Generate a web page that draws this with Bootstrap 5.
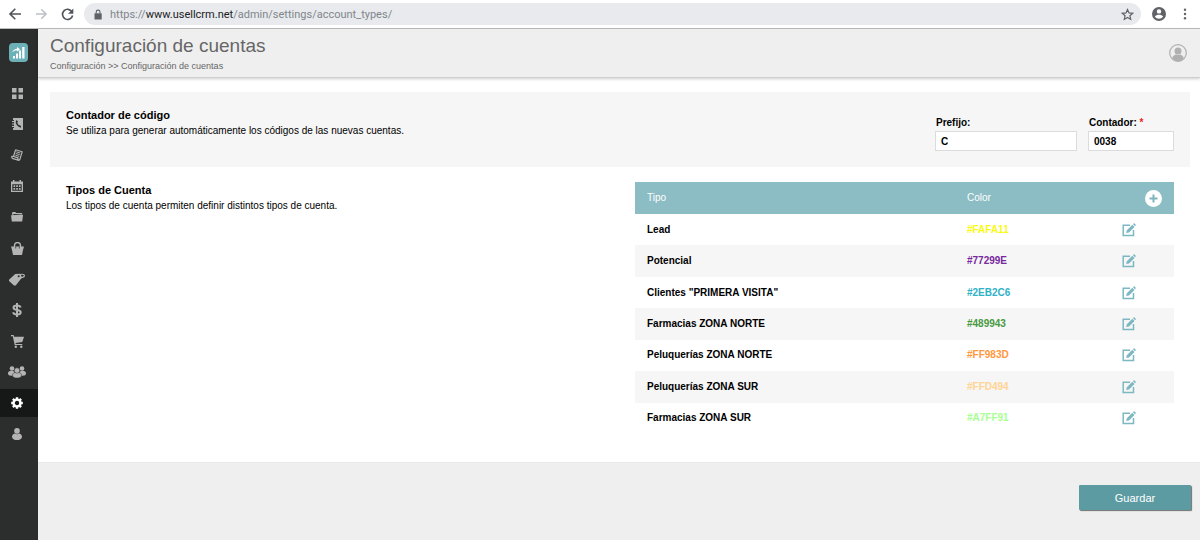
<!DOCTYPE html>
<html lang="es">
<head>
<meta charset="utf-8">
<meta name="viewport" content="width=device-width, initial-scale=1">
<title>Configuración de cuentas</title>
<link href="https://cdn.jsdelivr.net/npm/bootstrap@5.3.0/dist/css/bootstrap.min.css" rel="stylesheet">
<style>
  body { font-family: "Liberation Sans", Arial, sans-serif; font-size: 10px; line-height: 16px; color: #000; background: #fff; }
  svg { display: block; fill: currentColor; flex: none; }
  .chrome-bar { height: 29px; padding: 0 12px 0 8px; border-bottom: 1px solid #bdbdbd; color: #5f6368; }
  .chrome-bar button, .rail-link, .icon-btn { border: 0; padding: 0; background: none; color: inherit; }
  .history { gap: 14px; }
  .omnibox { height: 22px; border-radius: 11px; background: #e8eaed; padding: 0 7px 0 8px; margin: 0 11px 0 10px; gap: 6px; }
  .address { font-family: Roboto, sans-serif; font-size: 11px; line-height: 16px; padding-top: 1px; color: #80868b; text-decoration: none; white-space: nowrap; }
  .address span { color: #202124; }
  .rail { width: 38px; background: #2c2e2d; color: #b4b4b4; }
  .rail-logo { margin: 14px 0 17px 9px; align-self: flex-start; }
  .rail-nav { gap: 3px; }
  .rail-link { height: 28px; padding-right: 4px; }
  .rail-link.active { background: #161817; color: #fff; }
  .page-head { background: #efefef; border-bottom: 1px solid #cfcfcf; box-shadow: 0 1px 3px #0003; height: 49px; padding: 0 13px 0 12px; color: #666; }
  .page-head h1 { font-size: 19px; line-height: 24px; margin: 5px 0 0; font-weight: 400; }
  .crumbs { font-size: 9px; line-height: 16px; }
  .crumbs a { color: inherit; text-decoration: none; }
  .block { display: grid; grid-template-columns: 19fr 18fr; padding: 0 16px; margin: 0 10px 0 12px; }
  .block h2 { font-size: 11px; line-height: 16px; font-weight: 700; margin: 0; }
  .counter { background: #f6f6f6; margin-top: 14px; padding-top: 15px; padding-bottom: 15px; min-height: 75px; }
  .fields { gap: 11px; padding-top: 8px; }
  .fields label { font-weight: 700; margin-left: 1px; }
  .fields input { display: block; width: 100%; height: 20px; border: 1px solid #dcdcdc; background: #fff; padding: 0 5px; font-weight: 700; color: #000; border-radius: 0; }
  .f-prefix { width: 142px; } .f-count { width: 86px; }
  .req { color: #e22; }
  .types { padding-top: 15px; padding-bottom: 28px; }
  .types-table { table-layout: fixed; width: 100%; height: 252px; font-weight: 700; }
  .types-table th, .types-table td { padding: 0 12px; vertical-align: middle; }
  .types-table thead { background: #8cbdc4; color: #fff; }
  .types-table th { font-weight: 400; height: 32px; }
  .types-table tbody tr:nth-child(even) { background: #f6f6f6; }
  .types-table .icon-btn { display: block; color: #7db8c2; }
  .types-table thead .icon-btn { color: #fff; margin-left: auto; }
  .c-color { width: 155px; } .c-act { width: 64px; }
  .page-foot { background: #efefef; border-top: 1px solid #e9e9e9; padding: 22px 9px; }
  .btn-save { width: 112px; height: 25px; padding: 0; border: 0; border-radius: 1px; background: #5d9ba3; color: #fff; font-size: 11px; line-height: 16px; box-shadow: 1px 1px 1px #0008; }
</style>
</head>
<body class="d-flex flex-column min-vh-100">
<svg class="d-none" aria-hidden="true">
  <symbol id="edit" viewBox="0 0 14 14"><path fill="none" stroke="currentColor" stroke-width="1.500" d="M8 2.200H1.200v10.300h10.300V7"/><path d="M4.200 10l.6-2.800 5.500-5.500 2.200 2.200-5.500 5.500zM11 1.200l1-1.100 2 2-1 1.100z"/></symbol>
</svg>

<div class="chrome-bar d-flex align-items-center">
  <div class="history d-flex align-items-center">
    <button type="button" aria-label="Atrás"><svg width="14" height="14" viewBox="0 0 14 14"><path fill="none" stroke="#50545a" stroke-width="1.600" d="M13 7H2.500M7.300 1.800L2 7l5.300 5.200"/></svg></button>
    <button type="button" aria-label="Adelante"><svg width="11" height="14" viewBox="1 0 12 14"><path fill="none" stroke="#bdc0c4" stroke-width="1.600" d="M1 7h10.500M6.700 1.800L12 7l-5.300 5.200"/></svg></button>
    <button type="button" aria-label="Recargar"><svg width="13" height="13" viewBox="0 0 13 13"><path fill="none" stroke="#50545a" stroke-width="1.600" d="M11 3.800A5.100 5.100 0 1 0 11.600 7.500"/><path fill="#50545a" d="M12.300.600v5.200H7.100z"/></svg></button>
  </div>
  <div class="omnibox d-flex align-items-center flex-grow-1">
    <svg width="12" height="11" viewBox="0 0 12 11"><path d="M2.500 4.300h7.200v6.200H2.500z"/><path fill="none" stroke="currentColor" stroke-width="1.100" d="M4.200 4.500V3a1.900 1.900 0 0 1 3.800 0v1.500"/></svg>
    <a class="address" href="#">https://<span>www.usellcrm.net</span>/admin/settings/account_types/</a>
    <button type="button" class="ms-auto" aria-label="Marcador"><svg width="13" height="13" viewBox="0 0 13 13"><path fill="none" stroke="currentColor" stroke-width="1.200" d="M6.500 1.500l1.500 3.400 3.700.4-2.800 2.400.8 3.700-3.200-1.900-3.200 1.900.8-3.700L1.300 5.300l3.700-.4z"/></svg></button>
  </div>
  <button type="button" aria-label="Perfil"><svg width="14" height="14" viewBox="0 0 14 14"><path fill-rule="evenodd" d="M7 0a7 7 0 1 1 0 14A7 7 0 0 1 7 0zm0 2.200a2.200 2.200 0 1 0 0 4.400 2.200 2.200 0 0 0 0-4.400zM2.900 9.600c1 1.500 2.400 2.200 4.100 2.200s3.100-.7 4.100-2.200C10.500 8.400 8.400 7.800 7 7.800s-3.500.6-4.100 1.800z"/></svg></button>
  <button type="button" class="ms-3" aria-label="Menú"><svg width="6" height="12" viewBox="0 0 6 12"><circle cx="3" cy="1.700" r="1.200"/><circle cx="3" cy="6" r="1.200"/><circle cx="3" cy="10.300" r="1.200"/></svg></button>
</div>

<div class="d-flex flex-grow-1">
  <aside class="rail d-flex flex-column flex-shrink-0">
    <a class="rail-logo" href="#" aria-label="Inicio"><svg width="19" height="19" viewBox="0 0 19 19"><rect width="19" height="19" rx="4" fill="#6cb0b8"/><g fill="#fff"><path d="M4 13h2v2.500H4zM7 10.500h2v5H7zM10 7.500h2v8h-2zM13.200 4h2.300v11.500h-2.300z"/><path d="M3 9.600c1-2.600 3-3.700 5-3.800V4l3 2.300-2.700 2.500V7.500C6 7.400 4.500 8 3 9.600z"/></g></svg></a>
    <nav class="rail-nav d-flex flex-column">
      <a class="rail-link d-flex align-items-center justify-content-center" href="#" aria-label="Panel"><svg width="11" height="11" viewBox="0 0 11 11"><path d="M0 0h4.500v4.500H0zM6.500 0H11v4.500H6.500zM0 6.500h4.500V11H0zM6.500 6.500H11V11H6.500z"/></svg></a>
      <a class="rail-link d-flex align-items-center justify-content-center" href="#" aria-label="Agenda"><svg width="11" height="12" viewBox="0 0 11 12"><path d="M1 0h10v12H1v-2h1V9H0V8h2V6.500H0v-1h2V4H0V3h2V2H1z"/><path fill="none" stroke="#2c2e2d" stroke-width="1.500" d="M4.700 2.500c-1 2.800 1.400 6 4.300 6.400M4.300 3l1.400 1M7.500 8.900l.4-1.500"/></svg></a>
      <a class="rail-link d-flex align-items-center justify-content-center" href="#" aria-label="Notas"><svg width="12" height="12" viewBox="0 0 12 12"><path fill="none" stroke="currentColor" stroke-width="1.200" d="M4.600.800l6.500 2-2.200 7.500c-.3.900-1 1.100-1.800.9L2 9.700M4.600.800L2.500 7.500M2.500 7.500L.8 7.300c-.3 1.500 0 2.100 1.200 2.400M2.500 7.500l4.400 1.300.2 2.300"/><path fill="none" stroke="currentColor" d="M5.300 2.800l4 1.200M4.800 4.500l4 1.200M4.300 6.200l4 1.200"/></svg></a>
      <a class="rail-link d-flex align-items-center justify-content-center" href="#" aria-label="Calendario"><svg width="12" height="12" viewBox="0 0 12 12"><path fill-rule="evenodd" d="M0 1.500h2V0h1.500v1.500h5V0H10v1.500h2V12H0zM1.300 4.300v6.400h9.400V4.300z"/><path d="M2.500 5.200h1.700v1.700H2.500zM5.200 5.200h1.700v1.700H5.200zM7.900 5.200h1.700v1.700H7.900zM2.500 8h1.700v1.700H2.500zM5.200 8h1.700v1.700H5.200zM7.900 8h1.700v1.700H7.900z"/></svg></a>
      <a class="rail-link d-flex align-items-center justify-content-center" href="#" aria-label="Archivos"><svg width="12" height="10" viewBox="0 0 12 10"><path d="M1 2.500V1l.7-1h2.600l.8 1h6v1H3L1.500 3zM0 3.300L10.800 2.500l1.200.5-.8 6.400H.8z"/></svg></a>
      <a class="rail-link d-flex align-items-center justify-content-center" href="#" aria-label="Productos"><svg width="13" height="13" viewBox="0 0 13 13"><path d="M0 4.500h13L12 8l-1 5H2L1 8z"/><path fill="none" stroke="currentColor" stroke-width="1.400" d="M3.500 6V3.500a3 3 0 0 1 6 0V6"/><path fill="none" stroke="#2c2e2d" stroke-width=".7" d="M4.700 4.500v2M8.300 4.500v2"/></svg></a>
      <a class="rail-link d-flex align-items-center justify-content-center" href="#" aria-label="Tarifas"><svg width="16" height="13" viewBox="0 0 16 13"><path d="M6.200 1l5.200-.3 1.600 3.800-6.300 8L5 12.500 0 8V6.800z"/><path fill="none" stroke="currentColor" stroke-width="1.200" d="M9.500 2.600c2-2 6-1.600 5.900.2 0 1.600-3.200 2.200-5.600 1.300"/><circle cx="9.700" cy="3.300" r="1" fill="#2c2e2d"/></svg></a>
      <a class="rail-link d-flex align-items-center justify-content-center" href="#" aria-label="Ventas"><svg width="10" height="14" viewBox="0 0 10 14"><path fill="none" stroke="currentColor" stroke-width="2" d="M8.600 4.400C8.200 3 6.800 2.500 5 2.500c-2 0-3.500.8-3.500 2.200C1.500 8 8.700 6 8.700 9.200c0 1.500-1.600 2.300-3.700 2.300S1.500 10.800 1.100 9.200M5 0v14"/></svg></a>
      <a class="rail-link d-flex align-items-center justify-content-center" href="#" aria-label="Pedidos"><svg width="13" height="13" viewBox="0 0 13 13"><path d="M0 0h2.600l.5 1.700H13L11.300 7 4.500 8l.3.900h6.500V10H3.700L1.800 1.200H0z"/><circle cx="4.800" cy="11.800" r="1.200"/><circle cx="10.300" cy="11.800" r="1.200"/></svg></a>
      <a class="rail-link d-flex align-items-center justify-content-center" href="#" aria-label="Clientes"><svg width="18" height="12" viewBox="0 0 18 12"><circle cx="4" cy="2.500" r="2.300"/><circle cx="14" cy="2.500" r="2.300"/><ellipse cx="3.400" cy="7.300" rx="3.400" ry="2.500"/><ellipse cx="14.600" cy="7.300" rx="3.400" ry="2.500"/><g stroke="#2c2e2d" stroke-width=".5"><ellipse cx="9" cy="9.200" rx="4.500" ry="2.800"/><circle cx="9" cy="4.500" r="2.700"/></g></svg></a>
      <a class="rail-link active d-flex align-items-center justify-content-center" href="#" aria-label="Configuración"><svg width="12" height="12" viewBox="0 0 12 12"><circle cx="6" cy="6" r="3.400" fill="none" stroke="currentColor" stroke-width="2.400"/><path fill="none" stroke="currentColor" stroke-width="2.400" d="M6 .2v2M6 9.800v2M.2 6h2M9.800 6h2M1.900 1.900l1.400 1.400M8.700 8.700l1.400 1.400M1.900 10.100l1.400-1.400M8.700 3.300l1.400-1.400"/></svg></a>
      <a class="rail-link d-flex align-items-center justify-content-center" href="#" aria-label="Usuario"><svg width="10" height="12" viewBox="0 0 10 12"><circle cx="5" cy="2.900" r="2.800"/><path d="M2.700 5.500c1.300 1 3.300 1 4.600 0C9 6 10 7.400 10 8.900 10 11 7.500 12 5 12S0 11 0 8.900C0 7.400 1 6 2.700 5.500z"/></svg></a>
    </nav>
  </aside>

  <div class="d-flex flex-column flex-grow-1">
    <header class="page-head d-flex justify-content-between align-items-center">
      <div class="align-self-start">
        <h1>Configuración de cuentas</h1>
        <nav class="crumbs" aria-label="Ruta"><a href="#">Configuración</a> &gt;&gt; <a href="#">Configuración de cuentas</a></nav>
      </div>
      <button type="button" class="icon-btn" aria-label="Mi cuenta"><svg width="18" height="18" viewBox="0 0 18 18"><circle cx="9" cy="9" r="8.300" fill="none" stroke="#b0b0b0" stroke-width="1.200"/><circle cx="9" cy="7" r="3.500" fill="#b0b0b0"/><path fill="#b0b0b0" d="M3.200 14.500c.5-2.400 2-3.600 3.700-3.900 1.300.6 2.900.6 4.200 0 1.700.3 3.200 1.500 3.700 3.900A8.300 8.300 0 0 1 9 17.300a8.300 8.300 0 0 1-5.800-2.800z"/></svg></button>
    </header>

    <main>
      <section class="block counter">
        <div>
          <h2>Contador de código</h2>
          <p class="mb-0">Se utiliza para generar automáticamente los códigos de las nuevas cuentas.</p>
        </div>
        <div class="fields d-flex justify-content-end">
          <div class="f-prefix"><label class="d-block" for="prefijo">Prefijo:</label><input id="prefijo" type="text" value="C"></div>
          <div class="f-count"><label class="d-block" for="contador">Contador: <span class="req">*</span></label><input id="contador" type="text" value="0038"></div>
        </div>
      </section>

      <section class="block types">
        <div>
          <h2>Tipos de Cuenta</h2>
          <p class="mb-0">Los tipos de cuenta permiten definir distintos tipos de cuenta.</p>
        </div>
        <table class="types-table">
          <thead><tr><th>Tipo</th><th class="c-color">Color</th><th class="c-act"><button type="button" class="icon-btn" aria-label="Añadir tipo"><svg width="17" height="17" viewBox="0 0 17 17"><circle cx="8.500" cy="8.500" r="8.500"/><path stroke="#7fb5bd" stroke-width="2" d="M8.500 4.500v8M4.500 8.500h8"/></svg></button></th></tr></thead>
          <tbody>
            <tr><td>Lead</td><td style="color:#FAFA11">#FAFA11</td><td><button type="button" class="icon-btn" aria-label="Editar"><svg width="14" height="14"><use href="#edit"/></svg></button></td></tr>
            <tr><td>Potencial</td><td style="color:#77299E">#77299E</td><td><button type="button" class="icon-btn" aria-label="Editar"><svg width="14" height="14"><use href="#edit"/></svg></button></td></tr>
            <tr><td>Clientes "PRIMERA VISITA"</td><td style="color:#2EB2C6">#2EB2C6</td><td><button type="button" class="icon-btn" aria-label="Editar"><svg width="14" height="14"><use href="#edit"/></svg></button></td></tr>
            <tr><td>Farmacias ZONA NORTE</td><td style="color:#489943">#489943</td><td><button type="button" class="icon-btn" aria-label="Editar"><svg width="14" height="14"><use href="#edit"/></svg></button></td></tr>
            <tr><td>Peluquerías ZONA NORTE</td><td style="color:#FF983D">#FF983D</td><td><button type="button" class="icon-btn" aria-label="Editar"><svg width="14" height="14"><use href="#edit"/></svg></button></td></tr>
            <tr><td>Peluquerías ZONA SUR</td><td style="color:#FFD494">#FFD494</td><td><button type="button" class="icon-btn" aria-label="Editar"><svg width="14" height="14"><use href="#edit"/></svg></button></td></tr>
            <tr><td>Farmacias ZONA SUR</td><td style="color:#A7FF91">#A7FF91</td><td><button type="button" class="icon-btn" aria-label="Editar"><svg width="14" height="14"><use href="#edit"/></svg></button></td></tr>
          </tbody>
        </table>
      </section>
    </main>

    <footer class="page-foot d-flex justify-content-end align-items-start flex-grow-1">
      <button type="submit" class="btn btn-save">Guardar</button>
    </footer>
  </div>
</div>
<script src="https://cdn.jsdelivr.net/npm/bootstrap@5.3.0/dist/js/bootstrap.bundle.min.js"></script>
</body>
</html>
